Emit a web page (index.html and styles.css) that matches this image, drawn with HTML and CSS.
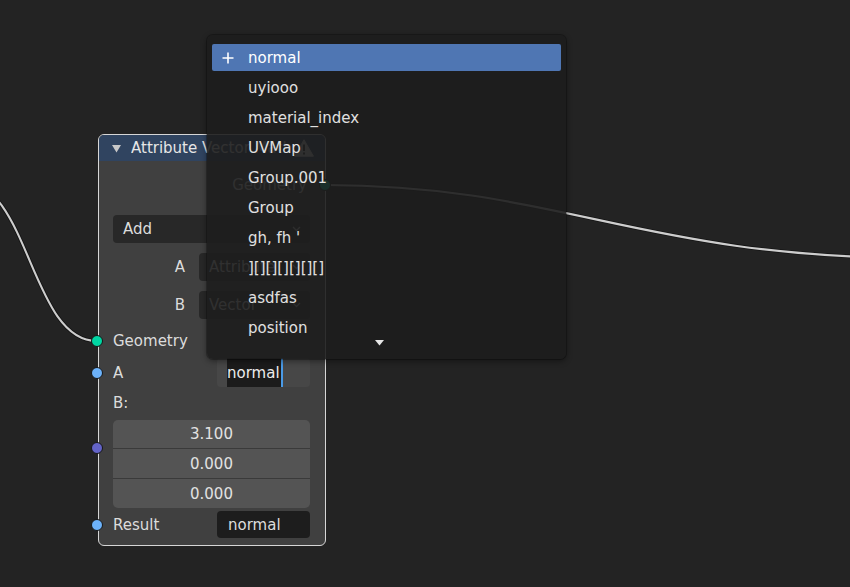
FILE: index.html
```html
<!DOCTYPE html>
<html>
<head>
<meta charset="utf-8">
<link rel="stylesheet" href="styles.css">
</head>
<body>
<div class="editor">
  <svg class="links" width="850" height="587" viewBox="0 0 850 587">
    <path class="link-shadow" d="M-40 180 C30 180 30 341 97 341"/>
    <path class="link" d="M-40 180 C30 180 30 341 97 341"/>
    <path class="link-shadow" d="M325 185 C560 185 640 258 920 258"/>
    <path class="link" d="M325 185 C560 185 640 258 920 258"/>
  </svg>

  <div class="node">
    <div class="node-header">
      <svg class="collapse" viewBox="0 0 9 9"><path d="M0 1 L9 1 L4.5 8.5 Z" fill="#c8c8c8"/></svg>
      <span class="title">Attribute Vector Math</span>
      <svg class="warn" viewBox="0 0 20 18"><path d="M10 0.8 L19.4 17.2 L0.6 17.2 Z" fill="#cfcfcf" stroke="#cfcfcf" stroke-linejoin="round" stroke-width="1"/><rect x="9" y="5.5" width="2" height="6.5" fill="#2c2c2c"/><rect x="9" y="13.5" width="2" height="2" fill="#2c2c2c"/></svg>
    </div>
    <div class="node-body">
      <div class="row out-row">
        <span>Geometry</span>
        <i class="socket geo out"></i>
      </div>
      <div class="select add-select">
        <span>Add</span>
        <svg class="chev" viewBox="0 0 9 6"><polyline points="1,1 4.5,4.5 8,1"/></svg>
      </div>
      <div class="prop-row">
        <span class="prop-label">A</span>
        <div class="select">
          <span>Attribute</span>
          <svg class="chev" viewBox="0 0 9 6"><polyline points="1,1 4.5,4.5 8,1"/></svg>
        </div>
      </div>
      <div class="prop-row">
        <span class="prop-label">B</span>
        <div class="select">
          <span>Vector</span>
          <svg class="chev" viewBox="0 0 9 6"><polyline points="1,1 4.5,4.5 8,1"/></svg>
        </div>
      </div>
      <div class="row in-geo">
        <i class="socket geo in"></i>
        <span>Geometry</span>
      </div>
      <div class="row in-a">
        <i class="socket attr in"></i>
        <span>A</span>
        <div class="text-field editing"><span class="sel">normal</span><i class="cursor"></i></div>
      </div>
      <div class="row in-b">
        <span>B:</span>
      </div>
      <div class="vector">
        <i class="socket vec in"></i>
        <div class="vec-cell first">3.100</div>
        <div class="vec-cell">0.000</div>
        <div class="vec-cell">0.000</div>
      </div>
      <div class="row in-result">
        <i class="socket attr in"></i>
        <span>Result</span>
        <div class="text-field dark"><span>normal</span></div>
      </div>
    </div>
  </div>

  <div class="menu">
    <div class="item active">
      <svg class="plus" viewBox="0 0 12 12"><path d="M6 0.5 V11.5 M0.5 6 H11.5"/></svg>
      <span>normal</span>
    </div>
    <div class="item"><span class="icon-slot"></span><span>uyiooo</span></div>
    <div class="item"><span class="icon-slot"></span><span>material_index</span></div>
    <div class="item"><span class="icon-slot"></span><span>UVMap</span></div>
    <div class="item"><span class="icon-slot"></span><span>Group.001</span></div>
    <div class="item"><span class="icon-slot"></span><span>Group</span></div>
    <div class="item"><span class="icon-slot"></span><span>gh, fh '</span></div>
    <div class="item"><span class="icon-slot"></span><span>][][][][][][]</span></div>
    <div class="item"><span class="icon-slot"></span><span>asdfas</span></div>
    <div class="item"><span class="icon-slot"></span><span>position</span></div>
    <div class="more">
      <svg viewBox="0 0 9 6"><path d="M0 0 L9 0 L4.5 5.5 Z" fill="#e6e6e6"/></svg>
    </div>
  </div>
</div>
</body>
</html>
```

FILE: styles.css
```css
* { box-sizing: border-box; }
html, body { margin: 0; padding: 0; }
body {
  background: #232323;
  font-family: "DejaVu Sans", "Noto Sans", sans-serif;
  font-size: 15px;
  color: #dcdcdc;
}
.editor {
  position: relative;
  width: 850px;
  height: 587px;
  overflow: hidden;
  background: #232323;
}
.links { position: absolute; left: 0; top: 0; }
.link-shadow { fill: none; stroke: rgba(0,0,0,0.45); stroke-width: 3.8; }
.link { fill: none; stroke: #cdcdcd; stroke-width: 2.1; }

/* node */
.node {
  position: absolute;
  left: 98px;
  top: 134px;
  width: 228px;
  border: 1px solid #d6d6d6;
  border-radius: 6px;
  background: #404040;
}
.node-header {
  height: 26px;
  background: #304460;
  border-radius: 5px 5px 0 0;
  display: flex;
  align-items: center;
  padding: 0 11px 0 13px;
}
.collapse { width: 9px; height: 9px; flex: none; margin-right: 10px; }
.title { flex: 1; white-space: nowrap; overflow: hidden; color: #e6e6e6; }
.warn { width: 20px; height: 18px; flex: none; margin-left: 2px; }
.node-body {
  display: flex;
  flex-direction: column;
  padding: 0 15px 7px 14px;
}
.row { position: relative; display: flex; align-items: center; }
.out-row { margin-top: 11px; height: 26px; justify-content: flex-end; padding-right: 3px; }
.select {
  display: flex;
  align-items: center;
  height: 28px;
  background: #282828;
  border-radius: 4px;
  padding-left: 10px;
  flex: 1;
}
.add-select { margin-top: 17px; flex: none; }
.chev { width: 9px; height: 6px; margin-left: auto; margin-right: 9px; fill: none; stroke: #bdbdbd; stroke-width: 1.4; }
.prop-row { display: flex; align-items: center; margin-top: 10px; }
.prop-label { width: 72px; text-align: right; margin-right: 14px; }
.in-geo { margin-top: 9px; height: 26px; }
.in-a { margin-top: 4px; height: 29px; }
.in-b { margin-top: 3px; height: 26px; }
.in-result { margin-top: 3px; height: 27px; }

.text-field {
  margin-left: auto;
  width: 93px;
  height: 100%;
  border-radius: 4px;
  display: flex;
  align-items: center;
  padding-left: 10px;
}
.text-field.editing { background: #474747; }
.text-field.editing .sel {
  background: #1b1b1b;
  height: 100%;
  display: flex;
  align-items: center;
  padding-right: 1px;
  color: #ececec;
}
.cursor { width: 2px; height: 100%; background: #4a9ae6; }
.text-field.dark { background: #1d1d1d; padding-left: 11px; }

.vector {
  position: relative;
  margin-top: 4px;
  border-radius: 5px;
  background: #545454;
  display: flex;
  flex-direction: column;
}
.vec-cell {
  height: 30px;
  border-top: 1px solid #3a3a3a;
  display: flex;
  align-items: center;
  justify-content: center;
  color: #e2e2e2;
}
.vec-cell.first { height: 28px; border-top: none; }

.socket {
  position: absolute;
  width: 12px;
  height: 12px;
  border-radius: 50%;
  border: 1px solid #161616;
  top: 50%;
  margin-top: -6px;
}
.socket.in { left: -22px; }
.socket.out { right: -21px; }
.socket.geo { background: #00d6a3; }
.socket.attr { background: #6cb2fa; }
.socket.vec { background: #6363c7; top: 28px; }

/* menu */
.menu {
  position: absolute;
  left: 207px;
  top: 35px;
  width: 359px;
  height: 324px;
  background: rgba(29, 29, 29, 0.9);
  border-radius: 6px;
  box-shadow: 0 0 0 1px rgba(0,0,0,0.25), 0 2px 6px rgba(0,0,0,0.45);
  padding: 9px 5px 0 5px;
  display: flex;
  flex-direction: column;
  gap: 3px;
  color: #e0e0e0;
}
.item {
  height: 27px;
  display: flex;
  align-items: center;
  padding-left: 10px;
  border-radius: 2px;
}
.item.active { background: #4f76b3; color: #ffffff; }
.plus, .icon-slot { width: 12px; height: 12px; flex: none; margin-right: 14px; }
.plus { fill: none; stroke: #ffffff; stroke-width: 1.6; }
.more {
  display: flex;
  justify-content: center;
  padding-right: 15px;
  margin-top: -4px;
}
.more svg { width: 9px; height: 6px; }
```
